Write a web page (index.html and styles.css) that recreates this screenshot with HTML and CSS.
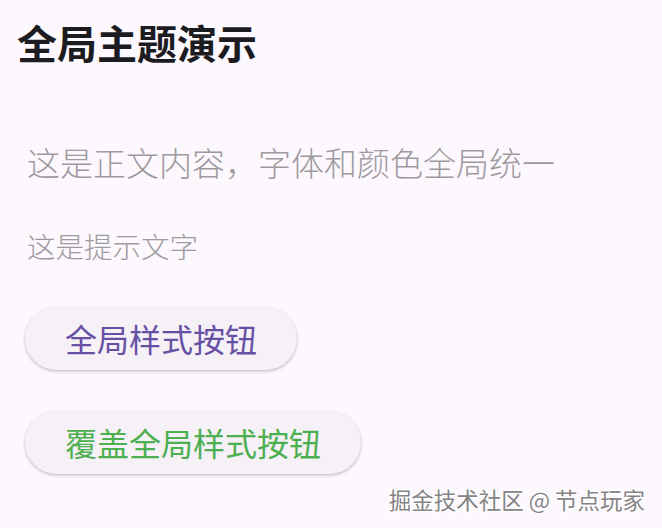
FILE: index.html
```html
<!DOCTYPE html>
<html lang="zh">
<head>
<meta charset="utf-8">
<link rel="stylesheet" href="styles.css">
</head>
<body>
<main class="screen">
  <h1 class="title">全局主题演示</h1>
  <p class="body-text">这是正文内容，字体和颜色全局统一</p>
  <p class="hint-text">这是提示文字</p>
  <button class="btn btn-global">全局样式按钮</button>
  <button class="btn btn-override">覆盖全局样式按钮</button>
  <div class="watermark">掘金技术社区 @ 节点玩家</div>
</main>
</body>
</html>
```
FILE: styles.css
```css
* { box-sizing: border-box; }
html, body {
  margin: 0;
  padding: 0;
  width: 662px;
  height: 528px;
  overflow: hidden;
  background: #fdf8fd;
  font-family: "Noto Sans CJK SC", "Noto Sans", sans-serif;
}
.screen {
  position: relative;
  height: 528px;
  display: flex;
  flex-direction: column;
  align-items: flex-start;
  padding: 19px 0 0 17px;
}
.title {
  margin: 0;
  font-size: 40px;
  font-weight: 700;
  line-height: 46px;
  color: #1c1b1f;
}
.body-text {
  margin: 75px 0 0 10px;
  font-size: 33px;
  font-weight: 300;
  line-height: 44px;
  color: #9e9ba0;
}
.hint-text {
  margin: 44px 0 0 10px;
  font-size: 28.5px;
  font-weight: 300;
  line-height: 36px;
  color: #9e9ba0;
}
.btn {
  border: none;
  font-family: inherit;
  font-size: 32px;
  line-height: 40px;
  padding: 11px 40px 12px 40px;
  border-radius: 32px;
  background: #f6f0f7;
  box-shadow: 0 1px 3px rgba(0,0,0,0.22), 0 2px 4px rgba(0,0,0,0.06);
  margin-left: 8px;
}
.btn-global {
  margin-top: 43px;
  color: #6750a4;
}
.btn-override {
  margin-top: 41px;
  color: #4caf50;
}
.watermark {
  position: absolute;
  right: 17px;
  bottom: 15px;
  font-size: 22.5px;
  line-height: 28px;
  color: #858386;
  text-shadow: 1px 1px 0 #ffffff, -1px -1px 0 #ffffff, 1px -1px 0 #fff, -1px 1px 0 #fff;
}
```
